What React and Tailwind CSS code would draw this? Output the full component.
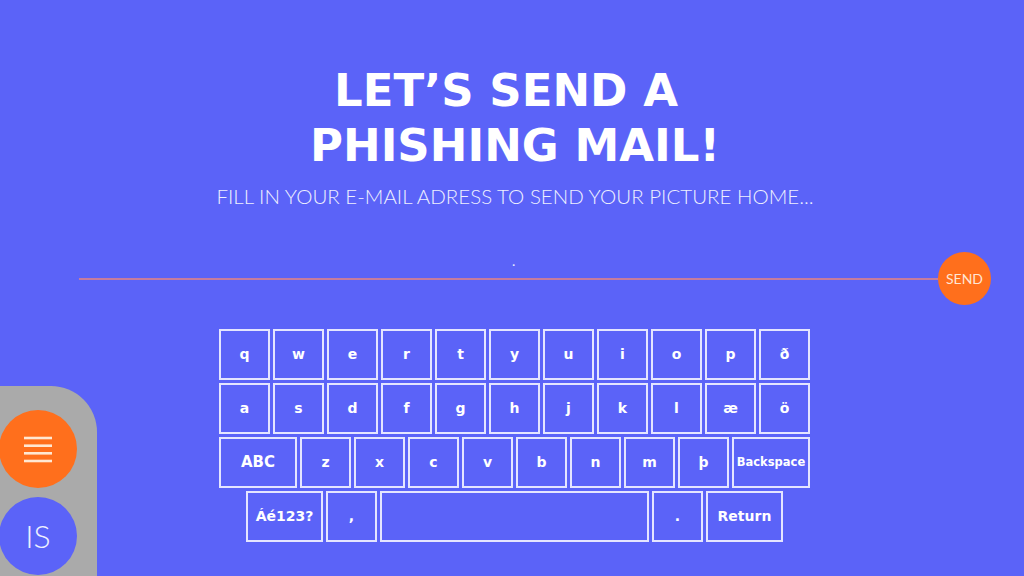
import React from "react";

const rows = [
  ["q", "w", "e", "r", "t", "y", "u", "i", "o", "p", "ð"],
  ["a", "s", "d", "f", "g", "h", "j", "k", "l", "æ", "ö"],
];

function Key({ children, className = "w-[51px]", text = "text-[14px]" }) {
  return (
    <div
      className={`${className} h-[51px] border-2 border-[#e4e5ff] flex items-center justify-center text-white font-bold ${text}`}
      style={{ fontFamily: '"DejaVu Sans", sans-serif' }}
    >
      {children}
    </div>
  );
}

export default function App() {
  return (
    <div
      className="relative w-[1024px] h-[576px] overflow-hidden bg-[#5b63f8] flex flex-col"
      style={{ fontFamily: 'Lato, "DejaVu Sans", sans-serif' }}
    >
      <div
        className="pt-[63px] text-center text-white font-bold text-[45px] leading-[55px]"
        style={{ fontFamily: '"DejaVu Sans", sans-serif' }}
      >
        <div className="pr-[12px]">LET’S SEND A</div>
        <div className="pl-[6px]">PHISHING MAIL!</div>
      </div>
      <div className="mt-[13px] pl-[6px] text-center text-[#eef0ff] font-light text-[20.5px] leading-[20px]">
        FILL IN YOUR E-MAIL ADRESS TO SEND YOUR PICTURE HOME...
      </div>

      <div className="relative mt-[46px] h-[53px] flex items-center pl-[79px] pr-[33px]">
        <div className="flex-1 h-[2px] bg-[#c67c9e]" />
        <div className="w-[53px] h-[53px] rounded-full bg-[#ff6f1c] flex items-center justify-center text-[#ffe6d4] text-[14px]">
          SEND
        </div>
        <span className="absolute left-[512px] top-[2px] text-[#e8eaff] text-[14px] leading-[14px]">.</span>
      </div>

      <div className="mt-[24px] pl-[5px] flex flex-col items-center gap-[3px]">
        {rows.map((r, i) => (
          <div key={i} className="flex gap-[3px]">
            {r.map((k) => (
              <Key key={k}>{k}</Key>
            ))}
          </div>
        ))}
        <div className="flex gap-[3px]">
          <Key className="w-[78px]" text="text-[15px]">ABC</Key>
          {["z", "x", "c", "v", "b", "n", "m", "þ"].map((k) => (
            <Key key={k}>{k}</Key>
          ))}
          <Key className="w-[78px]" text="text-[11.5px]">Backspace</Key>
        </div>
        <div className="flex gap-[3px]">
          <Key className="w-[77px]" text="text-[14px]">Áé123?</Key>
          <Key>,</Key>
          <Key className="w-[269px]"></Key>
          <Key>.</Key>
          <Key className="w-[77px]" text="text-[14px]">Return</Key>
        </div>
      </div>

      <div className="absolute left-0 bottom-0 w-[97px] h-[190px] bg-[#aaaaaa] rounded-tr-[46px] flex flex-col items-start pt-[24px] gap-[9px]">
        <div className="ml-[-1px] w-[78px] h-[78px] rounded-full bg-[#ff6f1c] flex items-center justify-center">
          <svg width="28" height="27" viewBox="0 0 28 27">
            <g stroke="#ffe8d2" strokeWidth="2.6">
              <line x1="0" y1="2" x2="28" y2="2" />
              <line x1="0" y1="9.7" x2="28" y2="9.7" />
              <line x1="0" y1="17.3" x2="28" y2="17.3" />
              <line x1="0" y1="25" x2="28" y2="25" />
            </g>
          </svg>
        </div>
        <div className="ml-[-1px] w-[78px] h-[78px] rounded-full bg-[#5b63f8] flex items-center justify-center text-[#eef0ff] text-[32px] font-light">
          IS
        </div>
      </div>
    </div>
  );
}
